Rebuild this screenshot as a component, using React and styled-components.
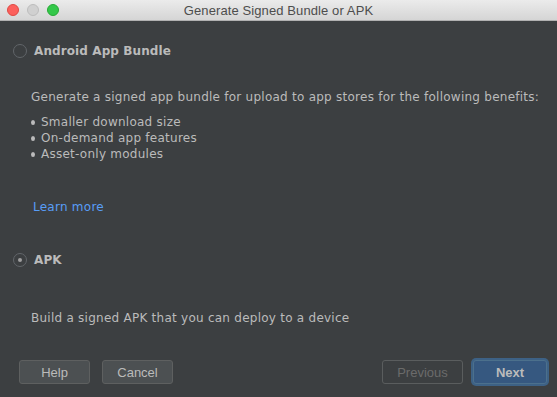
import React, { useState } from 'react';
import styled, { createGlobalStyle } from 'styled-components';

const GlobalStyle = createGlobalStyle`
  html, body {
    margin: 0;
    padding: 0;
    background: #3c3f41;
  }
`;

const Window = styled.div`
  width: 557px;
  height: 397px;
  display: flex;
  flex-direction: column;
  background: #3c3f41;
  overflow: hidden;
`;

const TitleBar = styled.div`
  height: 21px;
  flex: none;
  display: flex;
  align-items: center;
  position: relative;
  background: linear-gradient(#ebebeb, #d5d5d5);
  border-bottom: 1px solid #b1b1b1;
  box-sizing: border-box;
`;

const Lights = styled.div`
  display: flex;
  gap: 8px;
  padding-left: 7px;
`;

const Light = styled.span`
  width: 12px;
  height: 12px;
  border-radius: 50%;
  background: ${(p) => p.color};
  box-sizing: border-box;
  border: 0.5px solid ${(p) => p.edge};
`;

const Title = styled.div`
  position: absolute;
  left: 0;
  right: 0;
  text-align: center;
  font-family: 'Liberation Sans', Arial, sans-serif;
  font-size: 13px;
  letter-spacing: 0.1px;
  color: #4d4d4d;
`;

const Body = styled.div`
  flex: 1;
  display: flex;
  flex-direction: column;
  padding: 0 0 0 13px;
  font-family: 'DejaVu Sans', Verdana, sans-serif;
  color: #bbbbbb;
`;

const Option = styled.label`
  display: flex;
  align-items: center;
  gap: 7px;
  height: 16px;
  margin-top: ${(p) => p.top}px;
  font-size: 12px;
  font-weight: bold;
  letter-spacing: 0.1px;
  cursor: pointer;
`;

const Radio = styled.span`
  width: 14px;
  height: 14px;
  border-radius: 50%;
  box-sizing: border-box;
  border: 1px solid #62666a;
  background: #3c3f41;
  display: flex;
  align-items: center;
  justify-content: center;
  &::after {
    content: '';
    width: 4px;
    height: 4px;
    border-radius: 50%;
    background: ${(p) => (p.checked ? '#a0a0a0' : 'transparent')};
  }
`;

const Description = styled.div`
  margin-top: ${(p) => p.top}px;
  padding-left: 18px;
  font-size: 12px;
  letter-spacing: 0.25px;
  line-height: 16px;
`;

const Bullets = styled.ul`
  list-style: none;
  margin: 9px 0 0;
  padding: 0 0 0 18px;
  font-size: 12px;
  letter-spacing: 0.25px;
  line-height: 16px;
`;

const Bullet = styled.li`
  display: flex;
  align-items: center;
  gap: 6px;
  &::before {
    content: '';
    width: 4px;
    height: 5px;
    border-radius: 50%;
    background: #bbbbbb;
  }
`;

const Link = styled.a`
  margin-top: 37px;
  padding-left: 20px;
  font-size: 12px;
  letter-spacing: 0.25px;
  line-height: 16px;
  color: #589df6;
  text-decoration: none;
`;

const Footer = styled.div`
  margin-top: auto;
  display: flex;
  align-items: center;
  gap: 12px;
  padding: 0 10px 13px 6px;
`;

const Button = styled.button`
  width: ${(p) => p.w}px;
  height: 24px;
  margin-left: ${(p) => p.shift || 0}px;
  box-sizing: border-box;
  border-radius: 3px;
  border: 1px solid ${(p) => (p.primary ? '#4c708c' : p.disabled ? '#5a5d5e' : '#5e6060')};
  background: ${(p) => (p.primary ? '#365880' : p.disabled ? 'transparent' : '#4c5052')};
  box-shadow: ${(p) => (p.primary ? '0 0 0 2px #3d6185' : 'none')};
  color: ${(p) => (p.disabled ? '#6b6b6b' : '#bbbbbb')};
  font-family: 'Liberation Sans', Arial, sans-serif;
  font-size: 13px;
  font-weight: ${(p) => (p.primary ? 'bold' : 'normal')};
  padding: 0;
`;

const Spacer = styled.div`
  flex: 1;
`;

export default function App() {
  const [choice, setChoice] = useState('apk');

  return (
    <Window>
      <GlobalStyle />
      <TitleBar>
        <Lights>
          <Light color="#fc605c" edge="#de4a44" />
          <Light color="#d0d0d0" edge="#bdbdbd" />
          <Light color="#34c84a" edge="#27aa35" />
        </Lights>
        <Title>Generate Signed Bundle or APK</Title>
      </TitleBar>
      <Body>
        <Option top={22} onClick={() => setChoice('bundle')}>
          <Radio checked={choice === 'bundle'} />
          Android App Bundle
        </Option>
        <Description top={30}>
          Generate a signed app bundle for upload to app stores for the following benefits:
        </Description>
        <Bullets>
          <Bullet>Smaller download size</Bullet>
          <Bullet>On-demand app features</Bullet>
          <Bullet>Asset-only modules</Bullet>
        </Bullets>
        <Link href="#">Learn more</Link>
        <Option top={37} onClick={() => setChoice('apk')}>
          <Radio checked={choice === 'apk'} />
          APK
        </Option>
        <Description top={42}>Build a signed APK that you can deploy to a device</Description>
        <Footer>
          <Button w={71}>Help</Button>
          <Button w={71}>Cancel</Button>
          <Spacer />
          <Button w={81} disabled>
            Previous
          </Button>
          <Button w={74} primary shift={-2}>
            Next
          </Button>
        </Footer>
      </Body>
    </Window>
  );
}
